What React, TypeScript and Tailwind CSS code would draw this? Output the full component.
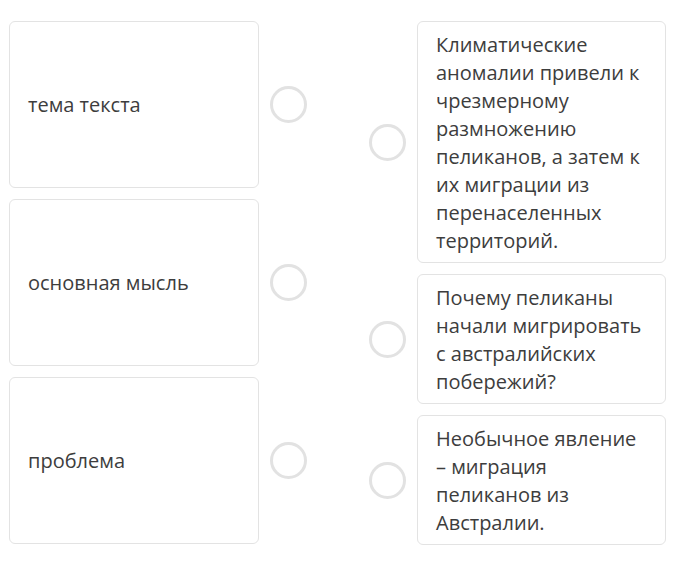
const leftItems = ["тема текста", "основная мысль", "проблема"];

const rightItems = [
  "Климатические аномалии привели к чрезмерному размножению пеликанов, а затем к их миграции из перенаселенных территорий.",
  "Почему пеликаны начали мигрировать с австралийских побережий?",
  "Необычное явление – миграция пеликанов из Австралии.",
];

function Circle() {
  return <div className="h-[37px] w-[37px] shrink-0 rounded-full border-[3px] border-[#e2e2e2]" />;
}

export default function App() {
  return (
    <div
      className="flex h-[572px] w-[686px] bg-white pl-[9px] pt-[21px] text-[20px] leading-[28px] text-[#3d3d3d]"
      style={{ fontFamily: '"Open Sans", "Noto Sans", sans-serif' }}
    >
      <div className="flex h-[523px] flex-col gap-[11px]">
        {leftItems.map((t) => (
          <div key={t} className="flex flex-1 items-center gap-[11px]">
            <div className="flex h-full w-[250px] items-center rounded-[6px] border border-[#e3e3e3] px-[18px]">
              {t}
            </div>
            <Circle />
          </div>
        ))}
      </div>
      <div className="ml-[62px] flex flex-col gap-[11px]">
        {rightItems.map((t) => (
          <div key={t} className="flex items-center gap-[11px]">
            <Circle />
            <div className="w-[249px] rounded-[6px] border border-[#e3e3e3] pb-[7px] pl-[18px] pr-[22px] pt-[9px]">
              {t}
            </div>
          </div>
        ))}
      </div>
    </div>
  );
}
